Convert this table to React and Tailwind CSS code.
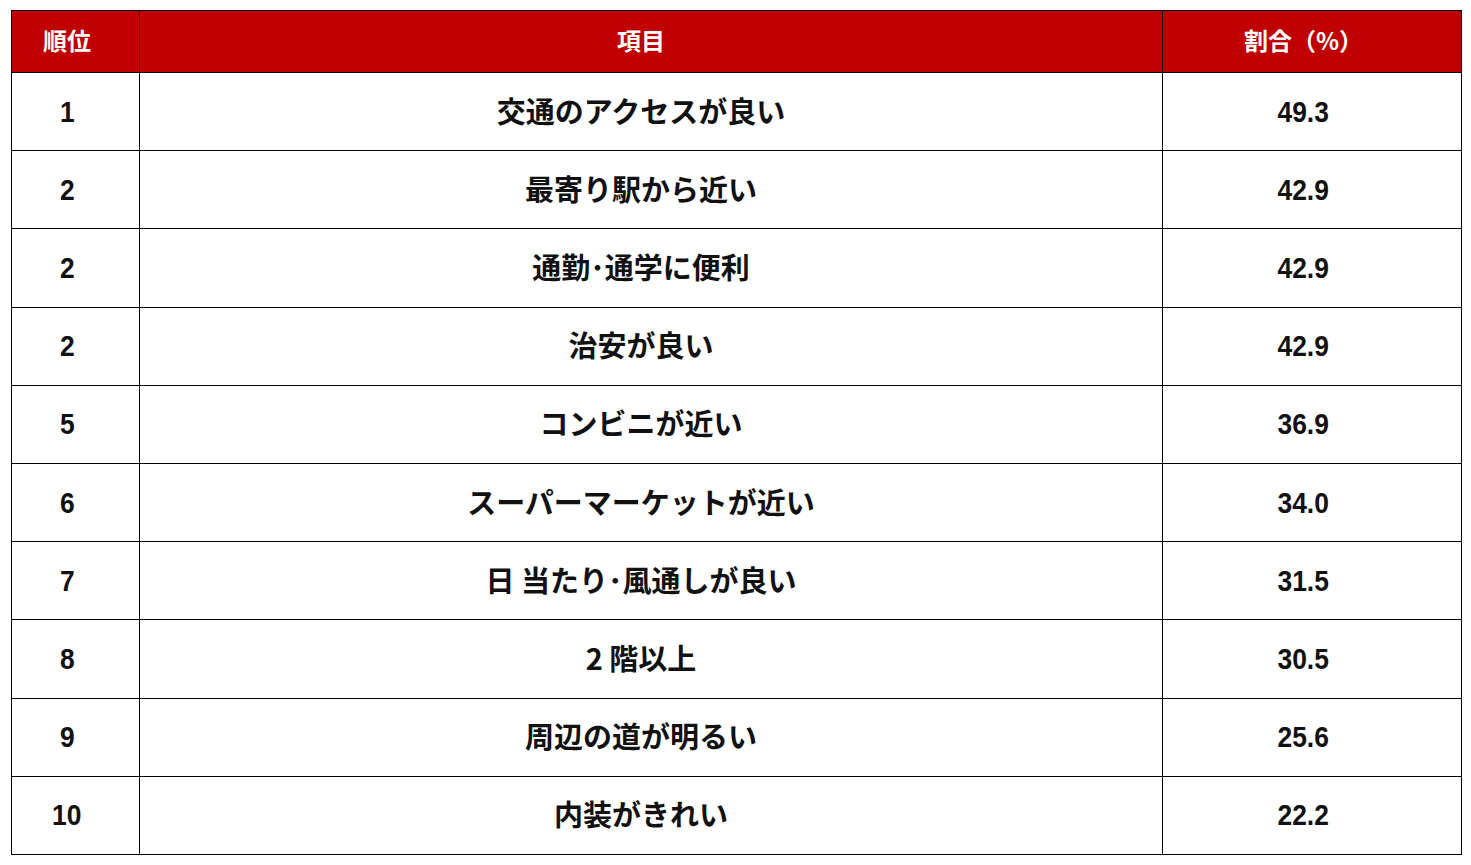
const rows = [
  { rank: '1', item: '交通のアクセスが良い', pct: '49.3' },
  { rank: '2', item: '最寄り駅から近い', pct: '42.9' },
  { rank: '2', item: '通勤･通学に便利', pct: '42.9' },
  { rank: '2', item: '治安が良い', pct: '42.9' },
  { rank: '5', item: 'コンビニが近い', pct: '36.9' },
  { rank: '6', item: 'スーパーマーケットが近い', pct: '34.0' },
  { rank: '7', item: '日 当たり･風通しが良い', pct: '31.5' },
  { rank: '8', item: '2 階以上', pct: '30.5' },
  { rank: '9', item: '周辺の道が明るい', pct: '25.6' },
  { rank: '10', item: '内装がきれい', pct: '22.2' },
];

const jp = "font-['Noto_Sans_CJK_JP',sans-serif]";
const num = "font-['Liberation_Sans','Noto_Sans_CJK_JP',sans-serif]";

const headCell = `flex h-[62px] items-center justify-center border-b border-r border-black bg-[#c00000] pb-[3px] text-[24px] font-bold leading-none text-white ${jp}`;
const numCell = 'flex h-[78.2px] items-center justify-center border-b border-r border-black pr-[17px] text-[#111]';

export default function App() {
  return (
    <div className="min-h-screen bg-white pt-[10px] pl-[11px]">
      <div className="grid w-[1451px] grid-cols-[128px_1023px_299px] border-l border-t border-black">
        {/* header */}
        <div className={`${headCell} pr-[17px]`}>順位</div>
        <div className={`${headCell} pr-[20px]`}>項目</div>
        <div className={`${headCell} pr-[17px]`}>割合（%）</div>

        {rows.map((r, idx) => (
          <div key={idx} className="contents">
            <div className={numCell}>
              <span className={`inline-block scale-x-[0.88] text-[30px] font-bold leading-none ${num}`}>{r.rank}</span>
            </div>
            <div className={`flex h-[78.2px] items-center justify-center border-b border-r border-black pr-[20px] pb-[3px] text-[29px] font-bold leading-none text-[#111] ${jp}`}>
              {r.item}
            </div>
            <div className={numCell}>
              <span className={`inline-block scale-x-[0.88] text-[30px] font-bold leading-none ${num}`}>{r.pct}</span>
            </div>
          </div>
        ))}
      </div>
    </div>
  );
}
